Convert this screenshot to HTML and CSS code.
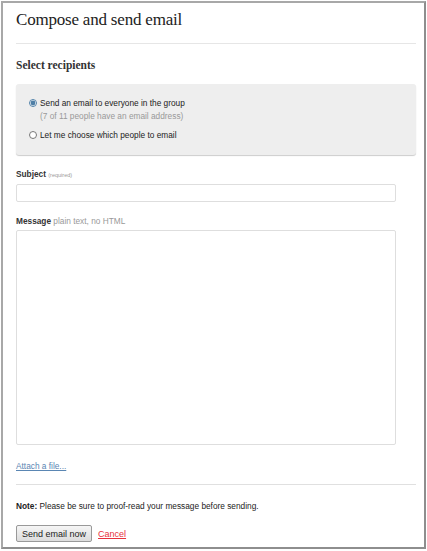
FILE: index.html
```html
<!DOCTYPE html>
<html lang="en">
<head>
  <meta charset="UTF-8">
  <title>Compose and send email</title>
  <link rel="stylesheet" href="styles.css">
</head>
<body>

  <div class="frame">
    <h1>Compose and send email</h1>

    <h2>Select recipients</h2>

    <!-- Recipient choice -->
    <div class="recipients">
      <label class="choice">
        <input type="radio" name="to" checked>
        <span>Send an email to everyone in the group
          <span class="hint">(7 of 11 people have an email address)</span>
        </span>
      </label>
      <label class="choice">
        <input type="radio" name="to">
        <span>Let me choose which people to email</span>
      </label>
    </div>

    <form class="compose">
      <label for="subject" class="field-label">Subject <small>(required)</small></label>
      <input type="text" id="subject" class="subject">

      <label for="message" class="field-label">Message <span class="soft">plain text, no HTML</span></label>
      <textarea id="message" class="message"></textarea>

      <a href="#" class="attach">Attach a file...</a>

      <hr class="rule">

      <p class="note"><b>Note:</b> Please be sure to proof-read your message before sending.</p>

      <div class="actions">
        <button type="button">Send email now</button>
        <a href="#" class="cancel">Cancel</a>
      </div>
    </form>
  </div>

</body>
</html>
```

FILE: styles.css
```css
body {
  margin: 0;
  background-color: white;
  font-family: "Liberation Sans", Arial, sans-serif;
  color: #333;
}

.frame {
  box-sizing: border-box;
  width: 425px;
  height: 548px;
  margin: 1px 0 0 1px;
  padding: 0 8px 0 13px;
  border: 2px solid #a8a8a8;
  border-right-color: #8e8e8e;
  border-bottom-color: #8e8e8e;
}

h1 {
  margin: 0;
  padding: 7px 0 13px;
  font-family: "Liberation Serif", "Times New Roman", serif;
  font-weight: normal;
  font-size: 17px;
  letter-spacing: -0.2px;
  line-height: 20px;
  color: #222;
  border-bottom: 1px solid #e6e6e6;
}

h2 {
  margin: 14px 0 12px;
  font-family: "Liberation Serif", "Times New Roman", serif;
  font-size: 11.5px;
  line-height: 14px;
  color: #333;
}

.recipients {
  background-color: #eeeeee;
  border-radius: 3px;
  box-shadow: 0 1px 1px rgba(0, 0, 0, 0.2);
  padding: 13px 14px 13px 13px;
}

.choice {
  display: flex;
  align-items: flex-start;
  font-size: 8.3px;
  color: #222;
  line-height: 13px;
  margin-bottom: 6px;
}

.choice:last-child {
  margin-bottom: 0;
}

.choice input {
  width: 8px;
  height: 8px;
  margin: 2px 3px 0 0;
  accent-color: #4f7fa6;
}

.hint {
  display: block;
  color: #999;
}

.compose {
  display: flex;
  flex-direction: column;
  align-items: flex-start;
}

.field-label {
  font-size: 8.3px;
  line-height: 10px;
  font-weight: bold;
  color: #333;
  margin: 14px 0 4px;
}

.field-label small {
  font-size: 5.5px;
  font-weight: normal;
  color: #999;
}

.soft {
  font-weight: normal;
  color: #999;
}

.subject {
  box-sizing: border-box;
  width: 380px;
  height: 18px;
  margin: 0;
  border: 1px solid #dedede;
  border-radius: 2px;
}

.message {
  box-sizing: border-box;
  width: 380px;
  height: 215px;
  margin: 0;
  border: 1px solid #dedede;
  border-radius: 2px;
  resize: none;
}

.attach {
  margin-top: 16px;
  font-size: 8.3px;
  line-height: 10px;
  color: #5a86b3;
}

.rule {
  align-self: stretch;
  border: none;
  border-top: 1px solid #e0e0e0;
  margin: 13px 0 0;
}

.note {
  font-size: 8.3px;
  line-height: 10px;
  color: #222;
  margin: 16px 0 14px;
}

.actions {
  display: flex;
  align-items: center;
  gap: 6px;
}

.actions button {
  font-family: "Liberation Sans", Arial, sans-serif;
  font-size: 9px;
  color: #222;
  padding: 0 5px;
  height: 17px;
  background: linear-gradient(#f6f6f6, #dcdcdc);
  border: 1px solid #999;
  border-radius: 2px;
}

.cancel {
  font-size: 9px;
  color: #e8303c;
}
```
